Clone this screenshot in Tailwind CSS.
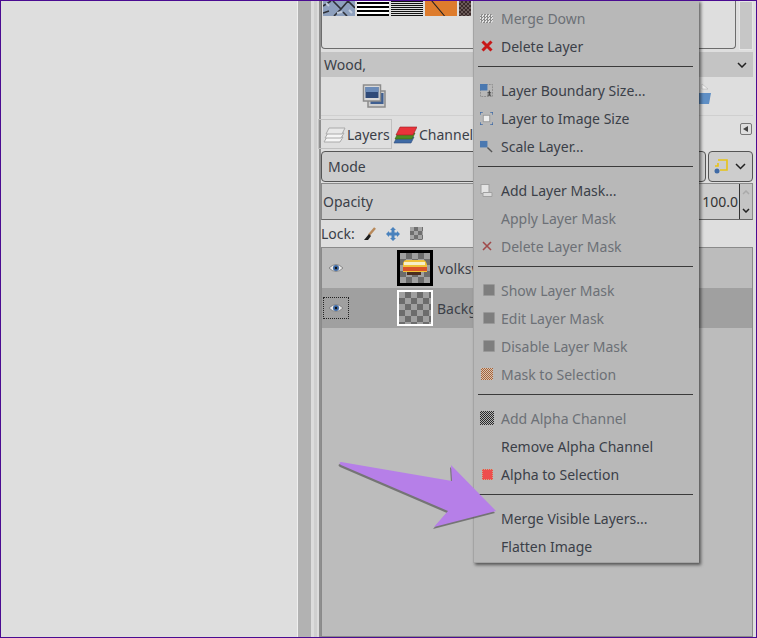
<!doctype html>
<html lang="en">
<head>
  <meta charset="UTF-8" />
  <title>GIMP layer menu</title>
  <script src="https://cdn.jsdelivr.net/npm/@tailwindcss/browser@4"></script>
</head>
<body class="overflow-hidden">
  <div class="relative w-[757px] h-[638px] overflow-hidden flex border border-[#4a0b91] bg-[#dedede] font-['Noto_Sans',sans-serif] text-[14px] text-[#3b4048]">

    <!-- empty canvas + dock handle -->
    <div class="w-[297px] shrink-0 border-r border-[#efefef]"></div>
    <div class="w-[13px] shrink-0 bg-[#b2b2b2]"></div>
    <div class="w-[10px] shrink-0 border-r-2 border-[#8f8f8f] bg-[#dcdcdc] flex justify-center">
      <div class="w-[3px] bg-[#cfcfcf]"></div>
    </div>

    <!-- right dock -->
    <div class="flex-1 min-w-0 flex flex-col pr-[3px]">
      <!-- brushes -->
      <div class="h-[48px] shrink-0 flex">
        <div class="flex-1 border border-t-0 border-[#6c6c6c] rounded-b-sm pl-[1px] flex gap-[2px] h-[48px] bg-[#dedede]">
          <svg class="shrink-0" width="32" height="15" viewBox="0 0 32 15">
            <rect width="32" height="15" fill="#8ea0bd"/>
            <path d="M0 5L8 0M10 0l8 8 7-8M18 8l-7 7M25 0l7 7M20 11l4 4M0 12l6-2" fill="none" stroke="#2f3138" stroke-width="1.600"/>
            <path d="M3 2l3 3M14 12l5-1M26 9l3 3" stroke="#c3cddd" stroke-width="2"/>
          </svg>
          <div class="w-[32px] h-[15px] bg-[repeating-linear-gradient(0deg,#000_0_2px,#fff_2px_4px)]"></div>
          <div class="w-[32px] h-[15px] bg-[repeating-linear-gradient(0deg,#111_0_1px,#ddd_1px_2px)]"></div>
          <div class="w-[32px] h-[15px] bg-[#de7c2d] relative overflow-hidden"><div class="absolute left-[14px] top-[-3px] w-[1px] h-[24px] bg-[#222] -rotate-[40deg]"></div></div>
          <div class="w-[12px] h-[15px] bg-[repeating-conic-gradient(#3a2a2a_0_25%,#6a5a58_0_50%)] bg-[length:4px_4px]"></div>
        </div>
        <div class="w-[14px] ml-[3px] h-[49px] bg-[#c6c6c6] border border-[#e6e6e6]"></div>
      </div>
      <!-- brush name -->
      <div class="h-[25px] mt-[3px] shrink-0 bg-[#c4c4c4] flex items-center justify-between pl-[3px] pr-[6px]">
        <span>Wood,</span>
        <svg width="10" height="6" viewBox="0 0 10 6"><path d="M1 1l4 4 4-4" fill="none" stroke="#222" stroke-width="1.5"/></svg>
      </div>
      <!-- brush actions -->
      <div class="h-[39px] shrink-0 flex items-center justify-between pl-[41px] pr-[41px] border-b border-[#cfcfcf]">
        <svg width="26" height="26" viewBox="0 0 26 26">
          <rect x="6" y="8" width="17" height="16" fill="#cfcfcf" stroke="#8c8c8c" stroke-width="1.5"/>
          <rect x="8.500" y="10" width="13" height="11" fill="#3f5f91"/>
          <rect x="1.500" y="2" width="17" height="16" fill="#d9d9d9" stroke="#8c8c8c" stroke-width="1.5"/>
          <rect x="3.500" y="4" width="13" height="11" fill="#2f4a78"/>
          <rect x="3.500" y="4" width="13" height="5" fill="#6b8bb8"/>
        </svg>
        <svg width="16" height="26" viewBox="0 0 16 26">
          <path d="M6 1l6 5H6z" fill="#f2f2f2" stroke="#aaa" stroke-width=".5"/>
          <path d="M1 10h14l-2 11H3z" fill="#5f8fc5"/>
        </svg>
      </div>
      <!-- tabs -->
      <div class="h-[35px] shrink-0 flex items-start pt-[3px] relative">
        <div class="h-[30px] w-[74px] -ml-[3px] border border-[#c0c0c0] flex items-center gap-[1px] px-[3px]">
          <svg class="shrink-0" width="24" height="24" viewBox="0 0 24 24">
            <path d="M2 20l3-5h16l-3 5z" fill="#f5f5f5" stroke="#aaa"/>
            <path d="M3 16l3-5h16l-3 5z" fill="#f5f5f5" stroke="#aaa"/>
            <path d="M4 12l3-6h16l-3 6z" fill="#e8e8e8" stroke="#aaa"/>
          </svg>
          <span>Layers</span>
        </div>
        <div class="h-[30px] flex items-center gap-[2px] pl-[1px]">
          <svg class="shrink-0" width="24" height="24" viewBox="0 0 24 24">
            <path d="M1 21l3-6h17l-3 6z" fill="#3f6aa5" stroke="#2b4a78" stroke-width=".6"/>
            <path d="M2 17l3-6h17l-3 6z" fill="#4d8a22" stroke="#356316" stroke-width=".6"/>
            <path d="M3 13l4-8h17l-4 8z" fill="#e8333b" stroke="#9c1c22" stroke-width=".6"/>
          </svg>
          <span>Channels</span>
        </div>
        <div class="absolute right-[1px] top-[7px] w-[12px] h-[12px] border border-[#777] rounded-[2px] flex items-center justify-center">
          <svg width="6" height="6" viewBox="0 0 6 6"><path d="M5 0v6L0 3z" fill="#444"/></svg>
        </div>
      </div>
      <!-- mode -->
      <div class="h-[31px] shrink-0 flex gap-[2px]">
        <div class="flex-1 border border-[#555] rounded-[4px] bg-[#cdcdcd] flex items-center px-[6px]">Mode</div>
        <div class="w-[45px] border border-[#555] rounded-[4px] bg-[#cdcdcd] flex items-center justify-between pl-[4px] pr-[6px]">
          <svg width="16" height="16" viewBox="0 0 16 16">
            <path d="M5 1h9v10H7" fill="none" stroke="#e8c316" stroke-width="1.600"/>
            <path d="M5 4v3H2" fill="none" stroke="#e8c316" stroke-width="1.600"/>
            <circle cx="4" cy="12" r="2.500" fill="#3f6aa5"/>
          </svg>
          <svg width="11" height="7" viewBox="0 0 11 7"><path d="M1 1l4.500 4.500L10 1" fill="none" stroke="#222" stroke-width="1.500"/></svg>
        </div>
      </div>
      <!-- opacity -->
      <div class="h-[37px] mt-[1px] shrink-0 flex border border-[#8a8a8a] border-b-[#666] bg-[#cdcdcd] items-center pl-[1px]">
        <span class="flex-1">Opacity</span>
        <span class="border-r border-[#333] h-full flex items-center pr-[1px] w-[37px] justify-end text-[#333]">100.0</span>
        <div class="w-[12px] h-full flex flex-col items-center justify-around bg-[#c4c4c4]">
          <svg width="8" height="5" viewBox="0 0 8 5"><path d="M1 4l3-3 3 3" fill="none" stroke="#aaa" stroke-width="1.500"/></svg>
          <svg width="8" height="5" viewBox="0 0 8 5"><path d="M1 1l3 3 3-3" fill="none" stroke="#222" stroke-width="1.500"/></svg>
        </div>
      </div>
      <!-- lock -->
      <div class="h-[27px] shrink-0 flex items-center">
        <span>Lock:</span>
        <svg class="ml-[8px]" width="14" height="14" viewBox="0 0 14 14"><path d="M12 1L6 8" stroke="#b8895a" stroke-width="2.500"/><path d="M6 7l2 2-3 4-4 0z" fill="#1d1d1d"/></svg>
        <svg class="ml-[9px]" width="14" height="14" viewBox="0 0 14 14"><path d="M7 0l3 3H8.500v2.500H11V4l3 3-3 3V8.500H8.500V11H10l-3 3-3-3h1.500V8.500H3V10L0 7l3-3v1.500h2.500V3H4z" fill="#4a82bd"/></svg>
        <div class="ml-[10px] w-[13px] h-[13px] bg-[repeating-conic-gradient(#6f6f6f_0_25%,#a5a5a5_0_50%)] bg-[length:8px_8px]"></div>
      </div>
      <!-- layers list -->
      <div class="flex-1 border border-[#8a8a8a] bg-[#bcbcbc]">
        <div class="h-[40px] flex items-center">
          <div class="w-[26px] h-[24px] ml-[1px] flex items-center justify-center">
            <svg width="16" height="10" viewBox="0 0 16 10"><path d="M1 5q7-7 14 0q-7 7-14 0z" fill="#e8e8e8" stroke="#777" stroke-width=".8"/><circle cx="8" cy="5" r="3" fill="#3f6aa5"/><circle cx="8" cy="5" r="1.200" fill="#111"/></svg>
          </div>
          <div class="w-[36px] h-[36px] ml-[48px] border-[3px] border-black bg-[repeating-conic-gradient(#6c6c6c_0_25%,#a0a0a0_0_50%)] bg-[length:12px_12px] flex items-center justify-center">
            <svg width="26" height="18" viewBox="0 0 26 18"><path d="M1 4q1-3 3-3h17q3 0 4 5v7H1z" fill="#f0c23a"/><rect x="2" y="3" width="21" height="3" fill="#f6efc8"/><rect x="1" y="8" width="24" height="4" fill="#d9542b"/><rect x="5" y="13" width="14" height="3" fill="#4a2d20"/></svg>
          </div>
          <span class="ml-[5px]">volkswagen</span>
        </div>
        <div class="h-[40px] flex items-center bg-[#a0a0a0]">
          <div class="w-[26px] h-[22px] ml-[1px] border border-dotted border-[#222] flex items-center justify-center">
            <svg width="16" height="10" viewBox="0 0 16 10"><path d="M1 5q7-7 14 0q-7 7-14 0z" fill="#e8e8e8" stroke="#777" stroke-width=".8"/><circle cx="8" cy="5" r="3" fill="#3f6aa5"/><circle cx="8" cy="5" r="1.200" fill="#111"/></svg>
          </div>
          <div class="w-[36px] h-[36px] ml-[48px] border-[2px] border-white bg-[repeating-conic-gradient(#6c6c6c_0_25%,#a0a0a0_0_50%)] bg-[length:12px_12px]"></div>
          <span class="ml-[4px]">Background</span>
        </div>
      </div>
    </div>

    <!-- context menu -->
    <div class="absolute left-[472px] top-[-1px] w-[226px] h-[563px] pt-[4px] bg-[#b8b8b8] border-l border-b border-[#a4a4a4] shadow-[2px_2px_3px_rgba(0,0,0,0.55)] flex flex-col">
      <div class="h-7 shrink-0 flex items-center text-[#6c7076]">
        <div class="w-[27px] pl-[6px]"><div class="w-[13px] h-[9px] rounded-[3px] bg-[repeating-conic-gradient(#8a8a8a_0_25%,#e2e2e2_0_50%)] bg-[length:3px_3px]"></div></div>
        <span>Merge Down</span>
      </div>
      <div class="h-7 shrink-0 flex items-center">
        <div class="w-[27px] pl-[7px] flex"><svg width="12" height="12" viewBox="0 0 12 12"><path d="M1.500 1.500l9 9M10.500 1.500l-9 9" stroke="#c81818" stroke-width="3"/></svg></div>
        <span>Delete Layer</span>
      </div>
      <div class="h-[16px] shrink-0 pt-[6px] pl-[4px] pr-[6px]"><div class="h-px bg-[#3a3a3a]"></div></div>
      <div class="h-7 shrink-0 flex items-center">
        <div class="w-[27px] pl-[6px] flex"><svg width="13" height="13" viewBox="0 0 14 14"><rect x=".500" y=".500" width="13" height="13" fill="none" stroke="#8a8a8a" stroke-dasharray="2 1"/><rect x="0" y="0" width="8" height="7" fill="#4a78b0"/><path d="M10 7v5M8 9.500h4M8 12h4" stroke="#333"/></svg></div>
        <span>Layer Boundary Size...</span>
      </div>
      <div class="h-7 shrink-0 flex items-center">
        <div class="w-[27px] pl-[6px] flex"><svg width="13" height="13" viewBox="0 0 14 14"><path d="M0 3V0h3M11 0h3v3M14 11v3h-3M3 14H0v-3" fill="none" stroke="#3f6aa5" stroke-width="1.500"/><rect x="3.500" y="3.500" width="7" height="7" fill="#eee" stroke="#999"/></svg></div>
        <span>Layer to Image Size</span>
      </div>
      <div class="h-7 shrink-0 flex items-center">
        <div class="w-[27px] pl-[6px] flex"><svg width="13" height="13" viewBox="0 0 14 14"><rect x="0" y="1" width="8" height="7" fill="#4a78b0"/><path d="M8 8l5 5" stroke="#555" stroke-width="1.500"/></svg></div>
        <span>Scale Layer...</span>
      </div>
      <div class="h-[16px] shrink-0 pt-[6px] pl-[4px] pr-[6px]"><div class="h-px bg-[#3a3a3a]"></div></div>
      <div class="h-7 shrink-0 flex items-center">
        <div class="w-[27px] pl-[6px] flex"><svg width="13" height="13" viewBox="0 0 13 13"><rect x="1" y="0.500" width="8" height="9" fill="#e4e4e4" stroke="#a0a0a0"/><path d="M3 12.500v-4h9v4z" fill="#dcdcdc" stroke="#a0a0a0"/></svg></div>
        <span>Add Layer Mask...</span>
      </div>
      <div class="h-7 shrink-0 flex items-center text-[#6c7076]">
        <div class="w-[27px]"></div>
        <span>Apply Layer Mask</span>
      </div>
      <div class="h-7 shrink-0 flex items-center text-[#6c7076]">
        <div class="w-[27px] pl-[8px] flex"><svg width="10" height="10" viewBox="0 0 10 10"><path d="M1 1l8 8M9 1l-8 8" stroke="#a04a4a" stroke-width="1.600"/></svg></div>
        <span>Delete Layer Mask</span>
      </div>
      <div class="h-[16px] shrink-0 pt-[6px] pl-[4px] pr-[6px]"><div class="h-px bg-[#3a3a3a]"></div></div>
      <div class="h-7 shrink-0 flex items-center text-[#6c7076]">
        <div class="w-[27px] pl-[9px]"><div class="w-[12px] h-[12px] bg-[#7e7e7e] border border-[#999] rounded-[1px]"></div></div>
        <span>Show Layer Mask</span>
      </div>
      <div class="h-7 shrink-0 flex items-center text-[#6c7076]">
        <div class="w-[27px] pl-[9px]"><div class="w-[12px] h-[12px] bg-[#7e7e7e] border border-[#999] rounded-[1px]"></div></div>
        <span>Edit Layer Mask</span>
      </div>
      <div class="h-7 shrink-0 flex items-center text-[#6c7076]">
        <div class="w-[27px] pl-[9px]"><div class="w-[12px] h-[12px] bg-[#7e7e7e] border border-[#999] rounded-[1px]"></div></div>
        <span>Disable Layer Mask</span>
      </div>
      <div class="h-7 shrink-0 flex items-center text-[#6c7076]">
        <div class="w-[27px] pl-[7px]"><div class="w-[12px] h-[12px] bg-[repeating-conic-gradient(#a5623a_0_25%,#d9c4b0_0_50%)] bg-[length:2px_2px]"></div></div>
        <span>Mask to Selection</span>
      </div>
      <div class="h-[16px] shrink-0 pt-[6px] pl-[4px] pr-[6px]"><div class="h-px bg-[#3a3a3a]"></div></div>
      <div class="h-7 shrink-0 flex items-center text-[#6c7076]">
        <div class="w-[27px] pl-[6px]"><div class="w-[14px] h-[14px] bg-[repeating-conic-gradient(#2a2a2a_0_25%,#b4b4b4_0_50%)] bg-[length:2px_2px]"></div></div>
        <span>Add Alpha Channel</span>
      </div>
      <div class="h-7 shrink-0 flex items-center">
        <div class="w-[27px]"></div>
        <span>Remove Alpha Channel</span>
      </div>
      <div class="h-7 shrink-0 flex items-center">
        <div class="w-[27px] pl-[8px]"><div class="w-[11px] h-[11px] bg-[#ee4d4d] border border-dotted border-[#c9a98a]"></div></div>
        <span>Alpha to Selection</span>
      </div>
      <div class="h-[16px] shrink-0 pt-[6px] pl-[4px] pr-[6px]"><div class="h-px bg-[#3a3a3a]"></div></div>
      <div class="h-7 shrink-0 flex items-center">
        <div class="w-[27px]"></div>
        <span>Merge Visible Layers...</span>
      </div>
      <div class="h-7 shrink-0 flex items-center">
        <div class="w-[27px]"></div>
        <span>Flatten Image</span>
      </div>
    </div>

    <!-- annotation arrow -->
    <svg class="absolute left-[329px] top-[452px]" width="180" height="85" viewBox="329 453 180 85">
      <path d="M340 465Q337 463 340 462L451 481L450 465L495 511L433 527L447 511Z" fill="#3a3a3a" opacity=".55" transform="translate(-1 2)"/>
      <path d="M340 465Q337 463 340 462L451 481L450 465L495 511L433 527L447 511Z" fill="#b67fe8"/>
    </svg>
  </div>
</body>
</html>
